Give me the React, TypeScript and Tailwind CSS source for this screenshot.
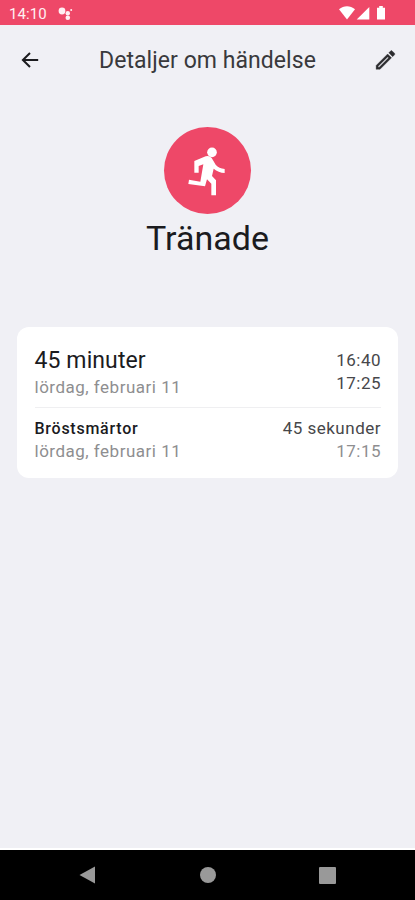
const ROWS = [
  {
    id: "duration",
    title: "45 minuter",
    titleClass: "text-[23px] leading-[28px] tracking-[0.1px] text-[#1b1b1e]",
    date: "lördag, februari 11",
    dateClass: "leading-[25px]",
    top: "16:40",
    bottom: "17:25",
    bottomClass: "text-[#47474a]",
    rowClass: "pt-[20px] pb-[7px]",
    rightClass: "pt-[2px]",
  },
  {
    id: "symptom",
    title: "Bröstsmärtor",
    titleClass: "text-[16px] leading-[23px] tracking-[0.75px] font-medium text-[#1b1b1e]",
    date: "lördag, februari 11",
    dateClass: "leading-[23px]",
    top: "45 sekunder",
    bottom: "17:15",
    bottomClass: "text-[#8e8e90]",
    rowClass: "pt-[9px] pb-[15px] border-t border-[#efeff1]",
    rightClass: "",
  },
];

function StatusBar() {
  return (
    <div className="h-[25px] shrink-0 bg-[#ee4868] flex items-center justify-between pl-[9px] pr-[28px] text-[#fff0f3]">
      <div className="flex items-center gap-[11px] pt-[3px]">
        <span className="text-[15px] leading-[20px] tracking-[0.1px]">14:10</span>
        <svg width="16" height="14" viewBox="0 0 16 14" fill="currentColor">
          <circle cx="4" cy="4" r="3.4" />
          <circle cx="9.8" cy="6.2" r="2.2" />
          <circle cx="9.8" cy="10.8" r="2.3" />
          <circle cx="13.2" cy="2.9" r="1" />
        </svg>
      </div>
      <svg width="48" height="16" viewBox="0 0 48 16" fill="#fff">
        <path d="M0 4.2C4.8 0.3 11.2 0.3 16 4.2L8 14.6Z" />
        <path d="M30.3 2V14.6H17.7Z" />
        <path d="M38 2.8H40.2V1H43.8V2.8H46V14.6H38Z" />
      </svg>
    </div>
  );
}

function Header() {
  return (
    <header className="h-[71px] shrink-0 flex items-center justify-between pl-[18px] pr-[17px]">
      <button aria-label="Tillbaka">
        <svg width="24" height="24" viewBox="0 0 24 24" fill="none" stroke="#1b1b1e" strokeWidth="2">
          <path d="M20.2 11H5M12 4L4.9 11l7.1 7" />
        </svg>
      </button>
      <h1 className="text-[23px] leading-[30px] tracking-[0.05px] text-[#39393c] whitespace-nowrap">Detaljer om händelse</h1>
      <button aria-label="Redigera">
        <svg width="25" height="25" viewBox="0 0.5 24 24" fill="#2b2b2e" stroke="#2b2b2e" strokeWidth="0.3">
          <path d="M14.06 9.02l.92.92L5.92 19H5v-.92l9.06-9.06M17.66 3c-.25 0-.51.1-.7.29l-1.83 1.83 3.75 3.75 1.83-1.83c.39-.39.39-1.02 0-1.41l-2.34-2.34c-.2-.2-.45-.29-.71-.29zm-3.6 3.19L3 17.25V21h3.75L17.81 9.94l-3.75-3.75z" />
        </svg>
      </button>
    </header>
  );
}

function NavBar() {
  return (
    <nav className="h-[50px] shrink-0 bg-black flex items-center justify-between pl-[79px] pr-[79px]">
      <svg width="17" height="18" viewBox="0 0 17 18" fill="#999">
        <path d="M0.5 9L16 0.5V17.5Z" />
      </svg>
      <div className="size-4 rounded-full bg-[#999]" />
      <div className="size-[17px] rounded-[1px] bg-[#999]" />
    </nav>
  );
}

export default function App() {
  return (
    <div className="w-[415px] h-[900px] flex flex-col overflow-hidden bg-[#f0f0f5] font-['Roboto',sans-serif]">
      <StatusBar />
      <Header />

      <main className="flex-1 flex flex-col">
        {/* Activity */}
        <div className="pt-[31px] flex flex-col items-center">
          <div className="size-[87px] rounded-full bg-[#ee4868] flex items-center justify-center">
            <svg width="54" height="62" viewBox="0 0 162 186" fill="#fff">
              <circle cx="93" cy="37" r="14.5" />
              <path d="M40 63L74 49Q86 46 92 54L104 74Q114 85 131 87V99Q112 98 98 86L93 108L105 121V166H91V131L78 118L72 139L22 132L24 119L58 125L67 73L53 78V98H40Z" />
            </svg>
          </div>
          <h2 className="mt-[3px] text-[34px] leading-[42px] text-[#1b1b1e]">Tränade</h2>
        </div>

        {/* Details */}
        <div className="mt-[68px] mx-[17px] pl-[17.5px] pr-[17px] rounded-[12px] bg-white">
          {ROWS.map(row => (
            <div key={row.id} className={`flex justify-between ${row.rowClass}`}>
              <div>
                <p className={row.titleClass}>{row.title}</p>
                <p className={`text-[17px] tracking-[0.5px] text-[#8e8e90] ${row.dateClass}`}>{row.date}</p>
              </div>
              <div className={`text-right text-[17px] leading-[23px] tracking-[0.5px] ${row.rightClass}`}>
                <p className="text-[#47474a]">{row.top}</p>
                <p className={row.bottomClass}>{row.bottom}</p>
              </div>
            </div>
          ))}
        </div>
      </main>

      <div className="h-[2px] shrink-0 bg-white" />
      <NavBar />
    </div>
  );
}
